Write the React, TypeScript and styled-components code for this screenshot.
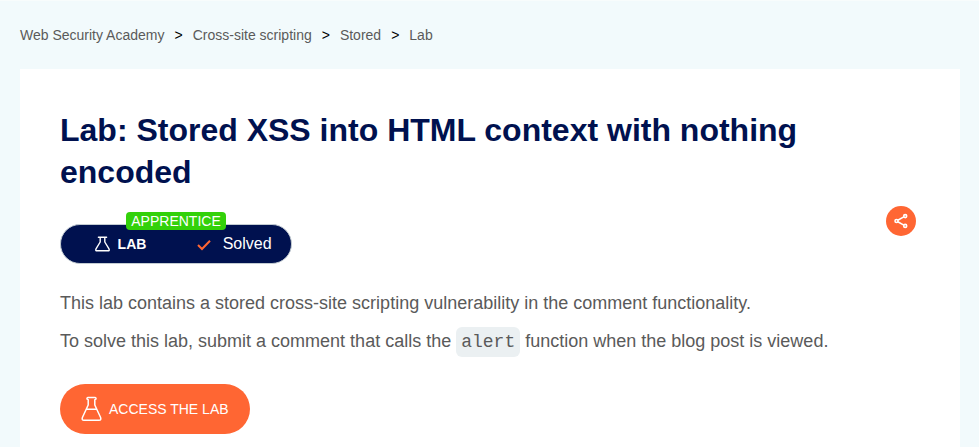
import React from "react";
import styled, { createGlobalStyle } from "styled-components";

const GlobalStyle = createGlobalStyle`
  * { box-sizing: border-box; }
  body {
    margin: 0;
    background: #f2fafc;
    font-family: "Liberation Sans", Arial, sans-serif;
    color: #5a5a5a;
    overflow: hidden;
  }
`;

const Page = styled.div`
  height: 447px;
  overflow: hidden;
  border-top: 1px solid #f8fcfc;
  padding: 0 19px 0 20px;
`;

const Breadcrumbs = styled.nav`
  display: flex;
  align-items: center;
  gap: 10px;
  height: 68px;
  font-size: 14px;
  line-height: 20px;
  color: #5a5a5a;
`;

const Separator = styled.span`
  color: #000;
`;

const Card = styled.main`
  background: #fff;
  height: 420px;
  padding: 40px;
`;

const Title = styled.h1`
  margin: 0;
  width: 760px;
  font-size: 32px;
  line-height: 42px;
  font-weight: 700;
  color: #00114f;
`;

const StatusRow = styled.div`
  display: flex;
  justify-content: space-between;
  align-items: flex-start;
  margin-top: 13px;
  padding-right: 4px;
  height: 58px;
`;

const Pill = styled.div`
  position: relative;
  display: flex;
  align-items: center;
  width: 232px;
  height: 40px;
  margin-top: 18px;
  padding: 0 19.4px 0 34px;
  border: 1px solid #c3ccd2;
  border-radius: 20px;
  background: #00114f;
  color: #fff;
`;

const Level = styled.span`
  position: absolute;
  left: 65px;
  top: -13px;
  width: 100px;
  height: 18px;
  border-radius: 4px;
  background: #33d10a;
  font-size: 14px;
  line-height: 19px;
  text-align: center;
`;

const Flask = styled.svg`
  margin-top: -1px;
`;

const PillLabel = styled.span`
  margin-left: 7.6px;
  font-size: 14px;
  font-weight: 700;
`;

const Solved = styled.span`
  margin-left: auto;
  font-size: 16px;
`;

const Tick = styled.svg`
  margin: 1px 0 0 50.4px;
`;

const ShareButton = styled.button`
  display: flex;
  align-items: center;
  justify-content: center;
  width: 30px;
  height: 30px;
  padding: 0;
  border: 0;
  border-radius: 50%;
  background: #ff6633;
`;

const Paragraph = styled.p<{ $gap: number }>`
  margin: ${({ $gap }) => $gap}px 0 0;
  font-size: 18px;
  line-height: 28px;
  white-space: nowrap;
`;

const Code = styled.code`
  padding: 5px;
  border-radius: 6px;
  background: #ebf0f2;
  font-family: "Liberation Mono", monospace;
  font-size: 18px;
`;

const AccessButton = styled.button`
  display: flex;
  align-items: center;
  width: 190px;
  height: 50px;
  margin-top: 28px;
  padding: 0 0 0 21px;
  gap: 7px;
  border: 0;
  border-radius: 25px;
  background: #ff6633;
  color: #fff;
  font-family: inherit;
  font-size: 14px;
  white-space: nowrap;
`;

const crumbs = ["Web Security Academy", "Cross-site scripting", "Stored", "Lab"];

export default function App() {
  return (
    <>
      <GlobalStyle />
      <Page>
        <Breadcrumbs>
          {crumbs.map((crumb, i) => (
            <React.Fragment key={crumb}>
              {i > 0 && <Separator>&gt;</Separator>}
              <span>{crumb}</span>
            </React.Fragment>
          ))}
        </Breadcrumbs>
        <Card>
          <Title>Lab: Stored XSS into HTML context with nothing encoded</Title>
          <StatusRow>
            <Pill>
              <Level>APPRENTICE</Level>
              <Flask width="15" height="16" viewBox="0 0 15 16" fill="none" stroke="#fff" strokeWidth="1.4" strokeLinecap="round" strokeLinejoin="round">
                <path d="M3.4 1.2H11.6M5.2 1.2V6L1 12.9Q0.2 14.8 2 14.8H13Q14.8 14.8 14 12.9L9.8 6V1.2" />
              </Flask>
              <PillLabel>LAB</PillLabel>
              <Tick width="14" height="12" viewBox="0 0 14 12" fill="none" stroke="#ff6633" strokeWidth="2">
                <path d="M1 6L5 10L13 1.7" />
              </Tick>
              <Solved>Solved</Solved>
            </Pill>
            <ShareButton aria-label="Share">
              <svg width="14" height="16" viewBox="0 0 14 16" fill="none" stroke="#fff" strokeWidth="1.6">
                <path d="M3.8 7.2L9.8 3.9M3.8 8.8L9.8 12.1" />
                <circle cx="2.5" cy="8" r="1.5" />
                <circle cx="11.2" cy="3.1" r="1.5" />
                <circle cx="11.2" cy="12.9" r="1.5" />
              </svg>
            </ShareButton>
          </StatusRow>
          <Paragraph $gap={25}>This lab contains a stored cross-site scripting vulnerability in the comment functionality.</Paragraph>
          <Paragraph $gap={10}>
            To solve this lab, submit a comment that calls the <Code>alert</Code> function when the blog post is viewed.
          </Paragraph>
          <AccessButton>
            <svg width="21" height="26" viewBox="0 0 21 26" fill="none" stroke="#fff" strokeWidth="1.5" strokeLinecap="round" strokeLinejoin="round">
              <path d="M7 1.6H14Q15.2 1.6 15 2.8Q14.8 3.7 13.8 3.8V9L19.6 21.5Q20.5 24.3 18 24.3H3Q0.5 24.3 1.4 21.5L7.2 9V3.8Q6.2 3.7 6 2.8Q5.8 1.6 7 1.6ZM5.3 13.3H15.7" />
            </svg>
            <span>ACCESS THE LAB</span>
          </AccessButton>
        </Card>
      </Page>
    </>
  );
}
